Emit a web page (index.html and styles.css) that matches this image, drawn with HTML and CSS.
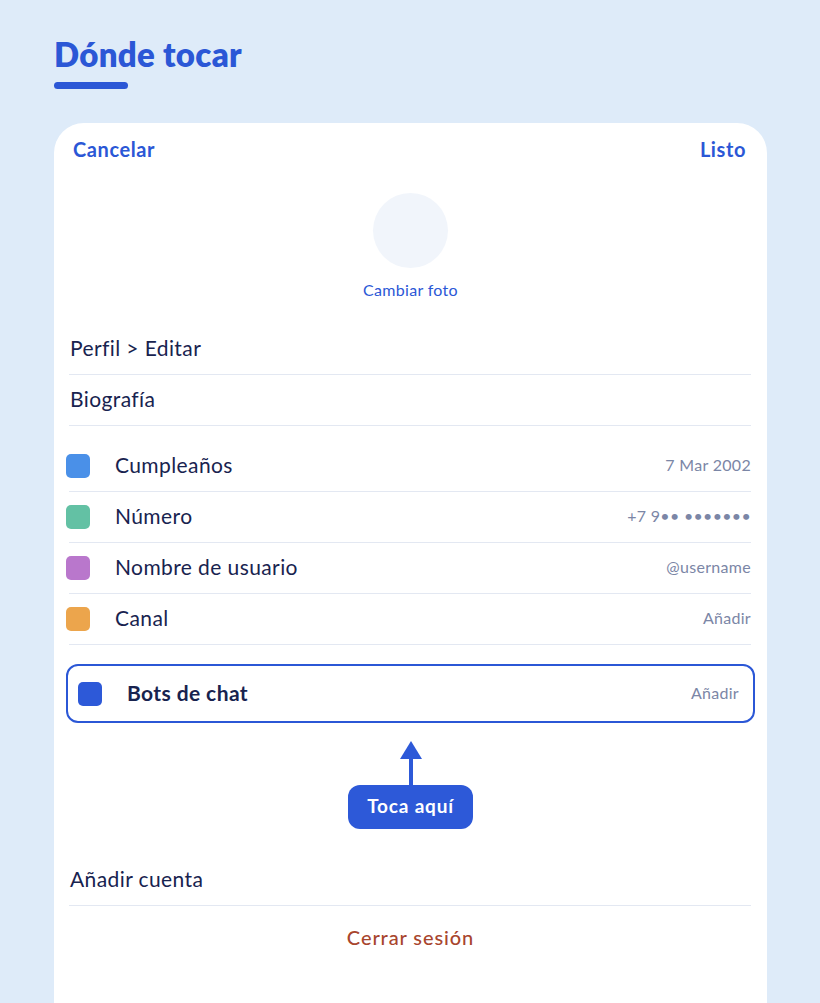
FILE: index.html
```html
<!DOCTYPE html>
<html lang="es">
<head>
    <meta charset="UTF-8">
    <meta name="viewport" content="width=device-width, initial-scale=1.0">
    <title>Dónde tocar</title>
    <link rel="stylesheet" href="styles.css">
</head>
<body>
    <div class="page">
        <h1 class="title">Dónde tocar</h1>
        <div class="title-bar"></div>

        <div class="card">
            <div class="card-head">
                <span class="head-link">Cancelar</span>
                <span class="head-link">Listo</span>
            </div>

            <div class="avatar-block">
                <div class="avatar"></div>
                <span class="avatar-link">Cambiar foto</span>
            </div>

            <div class="list">
                <div class="row">Perfil &gt; Editar</div>
                <div class="row">Biografía</div>
            </div>

            <div class="list list-icons">
                <div class="row">
                    <span class="dot dot-blue"></span>
                    <span class="label">Cumpleaños</span>
                    <span class="value">7 Mar 2002</span>
                </div>
                <div class="row">
                    <span class="dot dot-green"></span>
                    <span class="label">Número</span>
                    <span class="value">+7 9•• •••••••</span>
                </div>
                <div class="row">
                    <span class="dot dot-purple"></span>
                    <span class="label">Nombre de usuario</span>
                    <span class="value">@username</span>
                </div>
                <div class="row">
                    <span class="dot dot-orange"></span>
                    <span class="label">Canal</span>
                    <span class="value">Añadir</span>
                </div>
            </div>

            <div class="target">
                <span class="dot dot-target"></span>
                <span class="label">Bots de chat</span>
                <span class="value">Añadir</span>
            </div>

            <div class="hint">
                <svg class="arrow" width="24" height="44" viewBox="0 0 24 44">
                    <polygon points="12,0 1,18 23,18" fill="#2d59d8"/>
                    <rect x="10" y="16" width="4" height="28" fill="#2d59d8"/>
                </svg>
                <span class="hint-pill">Toca aquí</span>
            </div>

            <div class="list list-bottom">
                <div class="row">Añadir cuenta</div>
            </div>

            <div class="logout">Cerrar sesión</div>
        </div>
    </div>
</body>
</html>
```

FILE: styles.css
```css
body {
    margin: 0;
    background-color: #deebf9;
    font-family: Lato, "Noto Sans", sans-serif;
    color: #18234f;
}
.page {
    padding: 34px 53px 0 54px;
}
.title {
    margin: 0;
    font-size: 33px;
    line-height: 40px;
    font-weight: 800;
    letter-spacing: 0.3px;
    color: #2b57d6;
}
.title-bar {
    width: 74px;
    height: 7px;
    margin-top: 8px;
    border-radius: 4px;
    background-color: #2b57d6;
}
.card {
    margin-top: 34px;
    height: 900px;
    background-color: #fff;
    border-radius: 30px 30px 0 0;
}
.card-head {
    display: flex;
    justify-content: space-between;
    padding: 14px 21px 2px 19px;
}
.head-link {
    font-size: 20px;
    line-height: 24px;
    font-weight: 700;
    letter-spacing: 0.6px;
    color: #2b57d6;
}
.avatar-block {
    display: flex;
    flex-direction: column;
    align-items: center;
    margin-top: 30px;
}
.avatar {
    width: 75px;
    height: 75px;
    border-radius: 50%;
    background-color: #f1f5fb;
}
.avatar-link {
    margin-top: 13px;
    padding-bottom: 1px;
    font-size: 16px;
    line-height: 18px;
    letter-spacing: 0.3px;
    color: #2b57d6;
}
.list {
    margin: 24px 16px 0 15px;
}
.row {
    display: flex;
    align-items: center;
    height: 50px;
    box-sizing: border-box;
    padding-bottom: 3px;
    border-bottom: 1px solid #e3e8f2;
    font-size: 21px;
    letter-spacing: 0.4px;
    padding-left: 1px;
}
.row {
    height: 51px;
}
.list-icons {
    margin-top: 15px;
}
.list-icons .row {
    padding-left: 0;
}
.list-icons .dot {
    margin-left: -3px;
}
.dot {
    width: 24px;
    height: 24px;
    border-radius: 5px;
    flex-shrink: 0;
}
.list-icons .dot {
    margin-top: 3px;
}
.dot-blue { background-color: #4a90e8; }
.dot-green { background-color: #63c1a4; }
.dot-purple { background-color: #b977cc; }
.dot-orange { background-color: #eca54c; }
.dot-target { background-color: #2d59d8; }
.label {
    margin-left: 25px;
    flex: 1;
}
.value {
    font-size: 16px;
    letter-spacing: 0.3px;
    color: #7b86a6;
}
.target {
    display: flex;
    align-items: center;
    margin: 19px 12px 0 12px;
    height: 53px;
    padding: 0 14px 2px 10px;
    border: 2px solid #2b57d6;
    border-radius: 12px;
    font-size: 21px;
    letter-spacing: 0.4px;
}
.target .label {
    font-weight: 700;
}
.target .dot {
    margin-top: 2px;
}
.hint {
    display: flex;
    flex-direction: column;
    align-items: center;
    margin-top: 18px;
}
.arrow {
    display: block;
}
.hint-pill {
    padding: 0 19px 2px;
    height: 44px;
    line-height: 42px;
    box-sizing: border-box;
    border-radius: 12px;
    background-color: #2d59d8;
    color: #fff;
    font-size: 19px;
    font-weight: 700;
    letter-spacing: 0.8px;
}
.list-bottom {
    margin-top: 26px;
}
.logout {
    margin-top: 18px;
    text-align: center;
    font-size: 20px;
    line-height: 26px;
    letter-spacing: 0.9px;
    color: #a8452d;
    font-weight: 500;
}
```
